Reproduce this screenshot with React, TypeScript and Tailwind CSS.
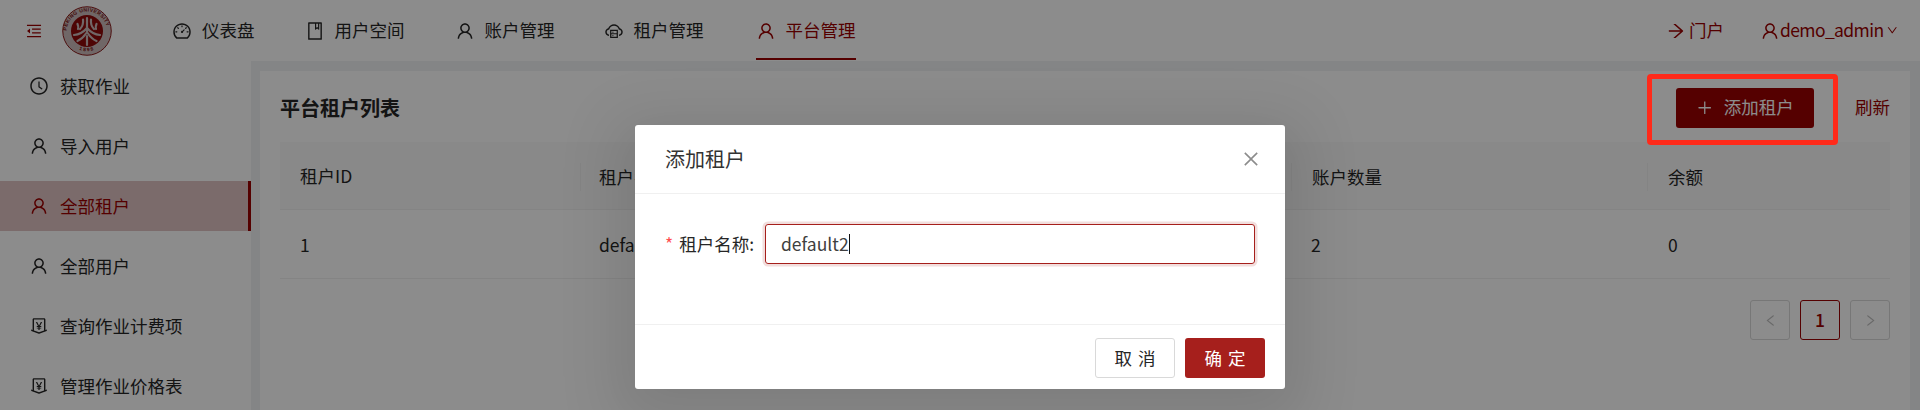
import {
  AiOutlineUser,
  AiOutlineClockCircle,
  AiOutlineDashboard,
  AiOutlineBook,
  AiOutlineCloudServer,
  AiOutlineMoneyCollect,
  AiOutlineMenuFold,
  AiOutlinePlus,
  AiOutlineArrowRight,
  AiOutlineDown,
  AiOutlineLeft,
  AiOutlineRight,
  AiOutlineClose,
} from "react-icons/ai";

const FONT = "font-['Noto_Sans_CJK_SC','Noto_Sans',sans-serif]";
const ICON = "h-[20px] w-[20px] shrink-0";

function Logo() {
  return (
    <svg viewBox="0 0 100 100" className="h-[50px] w-[50px] shrink-0">
      <defs>
        <path id="ringTop" d="M9 52a41 41 0 0 1 82 0" />
        <path id="ringBottom" d="M22 79a40 40 0 0 0 56 0" />
      </defs>
      <circle cx="50" cy="50" r="48.5" fill="#cdbcbc" stroke="#8b1a1a" strokeWidth="2" />
      <circle cx="50" cy="50" r="32" fill="#8f0a0a" />
      <text fontSize="10" fontWeight="700" fill="#7a1010" letterSpacing="0.8" fontFamily="'Liberation Sans',sans-serif">
        <textPath href="#ringTop" startOffset="2%">PEKING UNIVERSITY</textPath>
      </text>
      <text fontSize="10" fontWeight="700" fill="#7a1010" letterSpacing="2.5" fontFamily="'Liberation Sans',sans-serif">
        <textPath href="#ringBottom" startOffset="24%">1898</textPath>
      </text>
      <g fill="none" stroke="#cdbcbc" strokeWidth="4.4" strokeLinecap="round">
        <path d="M50 24v30" />
        <path d="M42 27c1 8-1 14-6 19" />
        <path d="M58 27c-1 8 1 14 6 19" />
        <path d="M31 36c2 4 2 7 1 10" />
        <path d="M69 36c-2 4-2 7-1 10" />
        <path d="M24 58c10-1 19-6 25-13" />
        <path d="M76 58c-10-1-19-6-25-13" />
        <path d="M31 70c7-3 13-9 17-15" />
        <path d="M69 70c-7-3-13-9-17-15" />
        <path d="M50 60v18" />
      </g>
    </svg>
  );
}

const navItems = [
  { label: "仪表盘", icon: <AiOutlineDashboard className={ICON} />, w: "mr-[50px]" },
  { label: "用户空间", icon: <AiOutlineBook className={ICON} />, w: "mr-[50px]" },
  { label: "账户管理", icon: <AiOutlineUser className={ICON} />, w: "mr-[49px]" },
  { label: "租户管理", icon: <AiOutlineCloudServer className={ICON} />, w: "mr-[52px]" },
];

const sideItems = [
  { label: "获取作业", icon: <AiOutlineClockCircle className={ICON} /> },
  { label: "导入用户", icon: <AiOutlineUser className={ICON} /> },
  { label: "全部租户", icon: <AiOutlineUser className={ICON} />, active: true },
  { label: "全部用户", icon: <AiOutlineUser className={ICON} /> },
  { label: "查询作业计费项", icon: <AiOutlineMoneyCollect className={ICON} /> },
  { label: "管理作业价格表", icon: <AiOutlineMoneyCollect className={ICON} /> },
];

export default function App() {
  return (
    <div className={`${FONT} relative h-[410px] w-[1920px] overflow-hidden bg-[#f0f2f5] text-[17.5px] text-[#262626]`}>
      <header className="flex h-[61px] items-center bg-white">
        <AiOutlineMenuFold className="ml-[25px] h-[18px] w-[18px] text-[#9b0000]" />
        <div className="ml-[19px] mr-[60px]"><Logo /></div>
        {navItems.map((n) => (
          <div key={n.label} className={`flex h-full items-center gap-[10px] ${n.w}`}>
            {n.icon}
            <span>{n.label}</span>
          </div>
        ))}
        <div className="relative flex h-full items-center gap-[10px] text-[#9b0000]">
          <AiOutlineUser className={ICON} />
          <span>平台管理</span>
          <div className="absolute bottom-[1px] left-0 right-0 h-[2px] bg-[#9b0000]" />
        </div>
        <div className="ml-auto flex items-center gap-[3px] text-[#9b0000]">
          <AiOutlineArrowRight className={ICON} />
          <span>门户</span>
        </div>
        <div className="ml-[36px] mr-[22px] flex items-center text-[#9b0000]">
          <AiOutlineUser className={ICON} />
          <span className="tracking-[-0.6px]">demo_admin</span>
          <AiOutlineDown className="ml-[2px] h-[12.5px] w-[12.5px]" />
        </div>
      </header>

      <div className="flex h-[349px]">
        <aside className="w-[251px] shrink-0 bg-white">
          {sideItems.map((s) => (
            <div
              key={s.label}
              className={`mb-[10px] flex h-[50px] items-center gap-[11px] pl-[29px] ${s.active ? "border-r-[3px] border-[#9b0000] bg-[#e0c4c4] text-[#9b0000]" : ""}`}
            >
              {s.icon}
              <span>{s.label}</span>
            </div>
          ))}
        </aside>

        <main className="ml-[9px] mr-[10px] mt-[10px] flex-1 bg-white px-[20px]">
          <div className="flex h-[71px] items-center justify-between pt-[2px]">
            <h2 className="text-[20px] font-bold">平台租户列表</h2>
            <div className="flex items-center gap-[41px]">
              <button className="flex h-[40px] w-[138px] items-center justify-center gap-[10px] rounded-[3px] bg-[#9b0000] text-white">
                <AiOutlinePlus className="h-[17.5px] w-[17.5px] shrink-0" />
                <span>添加租户</span>
              </button>
              <span className="text-[#9b0000]">刷新</span>
            </div>
          </div>

          <div className="grid h-[68px] grid-cols-[300px_711px_356px_243px] items-center border-b border-[#f0f0f0] bg-[#fafafa] pt-[2px]">
            <div className="pl-[20px]">租户ID</div>
            <div className="h-[28px] border-l border-[#f0f0f0] pl-[18px] leading-[28px]">租户名称</div>
            <div className="h-[28px] border-l border-[#f0f0f0] pl-[20px] leading-[28px]">账户数量</div>
            <div className="h-[28px] border-l border-[#f0f0f0] pl-[20px] leading-[28px]">余额</div>
          </div>
          <div className="grid h-[69px] grid-cols-[300px_711px_356px_243px] items-center border-b border-[#f0f0f0] pt-[2px]">
            <div className="pl-[20px]">1</div>
            <div className="pl-[19px]">default</div>
            <div className="pl-[20px]">2</div>
            <div className="pl-[21px]">0</div>
          </div>

          <div className="mt-[21px] flex justify-end gap-[10px]">
            <div className="flex h-[40px] w-[40px] items-center justify-center rounded-[3px] border border-[#d9d9d9] text-[#bfbfbf]">
              <AiOutlineLeft className="h-[15px] w-[15px]" />
            </div>
            <div className="flex h-[40px] w-[40px] items-center justify-center rounded-[3px] border border-[#9b0000] font-medium text-[#9b0000]">1</div>
            <div className="flex h-[40px] w-[40px] items-center justify-center rounded-[3px] border border-[#d9d9d9] text-[#bfbfbf]">
              <AiOutlineRight className="h-[15px] w-[15px]" />
            </div>
          </div>
        </main>
      </div>

      {/* annotation around the add button */}
      <div className="absolute left-[1647px] top-[74px] z-30 h-[71px] w-[191px] rounded-[4px] border-[5px] border-[#ff2a1a]" />

      {/* modal mask */}
      <div className="absolute inset-0 z-10 bg-black/45" />

      {/* modal */}
      <div className="absolute left-[635px] top-[125px] z-20 w-[650px] rounded-[3px] bg-white shadow-[0_15px_60px_20px_rgba(0,0,0,0.1)]">
        <div className="flex h-[69px] items-center justify-between border-b border-[#f0f0f0] pl-[30px] pr-[24px]">
          <span className="text-[20px] text-[#333333]">添加租户</span>
          <AiOutlineClose className="h-[20px] w-[20px] text-[#8c8c8c]" />
        </div>
        <div className="flex h-[130px] items-start pl-[30px] pr-[30px] pt-[30px]">
          <label className="flex h-[40px] w-[100px] items-center whitespace-nowrap text-[#262626]">
            <span className="mr-[6px] text-[#ff4d4f]">*</span>
            <span>租户名称:</span>
          </label>
          <div className="flex h-[40px] flex-1 items-center rounded-[3px] border border-[#a61f1c] pl-[15px] shadow-[0_0_0_2.5px_rgba(166,31,28,0.15)]">
            <span className="text-[#404040]">default2</span>
            <span className="h-[20px] w-px bg-[#111111]" />
          </div>
        </div>
        <div className="flex h-[65px] items-start justify-end gap-[10px] border-t border-[#f0f0f0] pr-[20px] pt-[13px]">
          <button className="flex h-[40px] w-[80px] items-center justify-center rounded-[3px] border border-[#d9d9d9] bg-white">
            <span className="-mr-[0.34em] tracking-[0.34em]">取消</span>
          </button>
          <button className="flex h-[40px] w-[80px] items-center justify-center rounded-[3px] bg-[#a61f1c] text-white">
            <span className="-mr-[0.34em] tracking-[0.34em]">确定</span>
          </button>
        </div>
      </div>
    </div>
  );
}
